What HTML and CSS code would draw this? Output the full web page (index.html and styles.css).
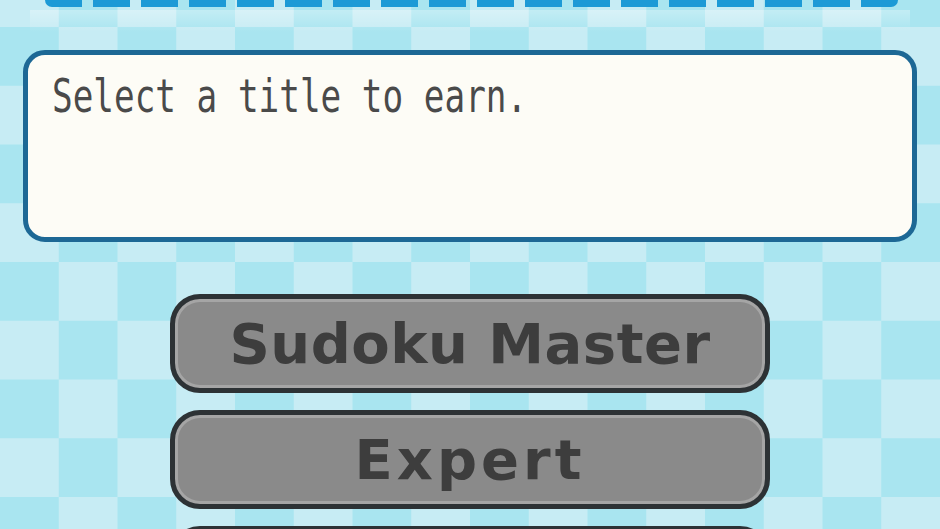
FILE: index.html
```html
<!DOCTYPE html>
<html>
<head>
<meta charset="utf-8">
<link rel="stylesheet" href="styles.css">
</head>
<body>
<div class="screen">
  <div class="top">
    <div class="dashes">
      <span class="dash first"></span><span class="dash"></span><span class="dash"></span><span class="dash"></span><span class="dash"></span><span class="dash"></span><span class="dash"></span><span class="dash"></span><span class="dash"></span><span class="dash"></span><span class="dash"></span><span class="dash"></span><span class="dash"></span><span class="dash"></span><span class="dash"></span><span class="dash"></span><span class="dash"></span><span class="dash last"></span>
    </div>
    <div class="glow"></div>
  </div>
  <div class="msgbox">
    <span class="msg">Select a title to earn.</span>
  </div>
  <div class="buttons">
    <div class="btn"><span class="label">Sudoku Master</span></div>
    <div class="btn"><span class="label wide">Expert</span></div>
    <div class="btn"><span class="label">&nbsp;</span></div>
  </div>
</div>
</body>
</html>
```
FILE: styles.css
```css
html, body {
  margin: 0;
  padding: 0;
}
.screen {
  width: 940px;
  height: 529px;
  overflow: hidden;
  display: flex;
  flex-direction: column;
  background: repeating-conic-gradient(#c7ecf4 0 25%, #a9e5f0 0 50%) 0 27px / 117.5px 117.5px;
}
.screen > * {
  flex: none;
}
.top {
  height: 50px;
  display: flex;
  flex-direction: column;
}
.dashes {
  display: flex;
  gap: 11px;
  padding-left: 45px;
  height: 7px;
  flex: none;
}
.dash {
  width: 37px;
  height: 7px;
  background: #1c9ad6;
  flex: none;
}
.dash.first {
  border-bottom-left-radius: 9px;
}
.dash.last {
  border-bottom-right-radius: 9px;
}
.glow {
  height: 22px;
  margin: 3px 30px 0;
  flex: none;
  background: linear-gradient(rgba(255,255,255,0.3), rgba(255,255,255,0));
}
.msgbox {
  margin: 0 23px;
  border: 5px solid #1d6895;
  border-radius: 22px;
  background: #fdfcf6;
  padding: 17px 24px 0;
  height: 165px;
}
.msg {
  display: inline-block;
  font-family: "DejaVu Sans Mono", monospace;
  font-size: 47px;
  line-height: 47px;
  color: #4a4a4a;
  white-space: nowrap;
  transform: scaleX(0.73);
  transform-origin: left center;
}
.buttons {
  margin-top: 52px;
  display: flex;
  flex-direction: column;
  align-items: center;
  gap: 17px;
}
.btn {
  width: 600px;
  height: 99px;
  box-sizing: border-box;
  border: 5px solid #2d3235;
  border-radius: 30px;
  background: #8a8a8a;
  box-shadow: inset 0 0 0 3px #a5a5a5;
  display: flex;
  align-items: center;
  justify-content: center;
  flex: none;
}
.label {
  font-family: "DejaVu Sans", sans-serif;
  font-weight: bold;
  font-size: 56px;
  color: #3d3d3d;
  letter-spacing: 0.5px;
}
.label.wide {
  letter-spacing: 4px;
}
```
